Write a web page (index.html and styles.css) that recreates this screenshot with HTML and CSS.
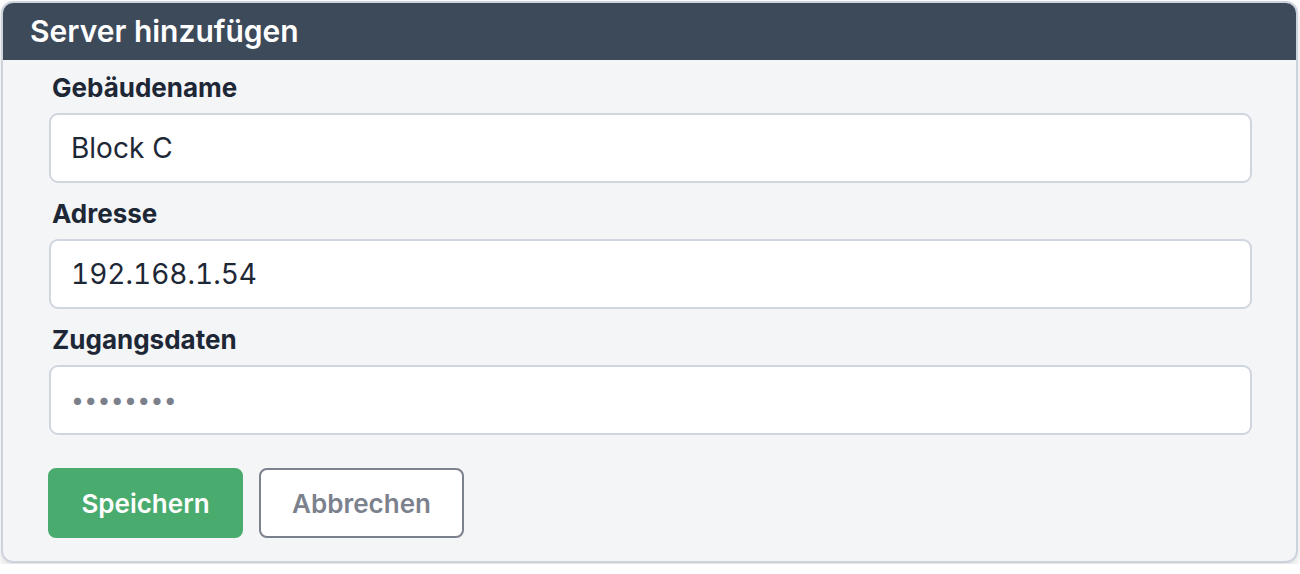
FILE: index.html
```html
<!DOCTYPE html>
<html lang="de">
<head>
<meta charset="utf-8">
<title>Server hinzufügen</title>
<link rel="stylesheet" href="styles.css">
</head>
<body>
<form class="card">
  <div class="card-header">Server hinzufügen</div>
  <div class="card-body">
    <div class="field">
      <label class="label" for="name">Gebäudename</label>
      <input class="input" id="name" type="text" value="Block C">
    </div>
    <div class="field">
      <label class="label" for="addr">Adresse</label>
      <input class="input num" id="addr" type="text" value="192.168.1.54">
    </div>
    <div class="field">
      <label class="label" for="cred">Zugangsdaten</label>
      <input class="input pw" id="cred" type="text" value="••••••••">
    </div>
    <div class="actions">
      <button type="button" class="btn btn-primary">Speichern</button>
      <button type="button" class="btn btn-secondary">Abbrechen</button>
    </div>
  </div>
</form>
</body>
</html>
```
FILE: styles.css
```css
* { box-sizing: border-box; }
html, body { margin: 0; padding: 0; background: #ffffff; }
body {
  font-family: Inter, "Noto Sans", "Liberation Sans", sans-serif;
  padding: 1px;
}
.card {
  width: 1297px;
  height: 562px;
  border: 2px solid #cdd3dc;
  border-radius: 12px;
  background: #f3f5f7;
  overflow: hidden;
  box-shadow: 0 5px 10px rgba(0, 0, 0, 0.12);
  display: flex;
  flex-direction: column;
  margin: 0;
}
.card-header {
  height: 57px;
  background: #3d4a5a;
  color: #ffffff;
  font-weight: 600;
  font-size: 30px;
  line-height: 57px;
  padding-left: 27px;
}
.card-body {
  padding: 12px 44px 22px 46px;
  display: flex;
  flex-direction: column;
}
.field {
  display: flex;
  flex-direction: column;
  gap: 9px;
  margin-bottom: 15px;
}
.label {
  font-weight: 700;
  font-size: 26px;
  line-height: 32px;
  color: #1e2735;
  padding-left: 3px;
}
.input {
  height: 70px;
  border: 2px solid #cfd6df;
  border-radius: 9px;
  background: #ffffff;
  padding: 0 0 0 20px;
  font-family: inherit;
  font-size: 28px;
  color: #1e2735;
  outline: none;
  width: 100%;
}
.input.num {
  font-variant-numeric: tabular-nums;
}
.input.pw {
  color: #7b808b;
  font-size: 23px;
  letter-spacing: 0.3px;
}
.actions {
  display: flex;
  gap: 16px;
  margin-top: 18px;
  margin-left: -1px;
}
.btn {
  height: 70px;
  border-radius: 8px;
  font-family: inherit;
  font-weight: 600;
  font-size: 26px;
  cursor: pointer;
}
.btn-primary {
  width: 195px;
  background: #4aab6e;
  border: 2px solid #4aab6e;
  color: #ffffff;
}
.btn-secondary {
  width: 205px;
  background: #ffffff;
  border: 2px solid #7c828d;
  color: #7c828d;
}
```
